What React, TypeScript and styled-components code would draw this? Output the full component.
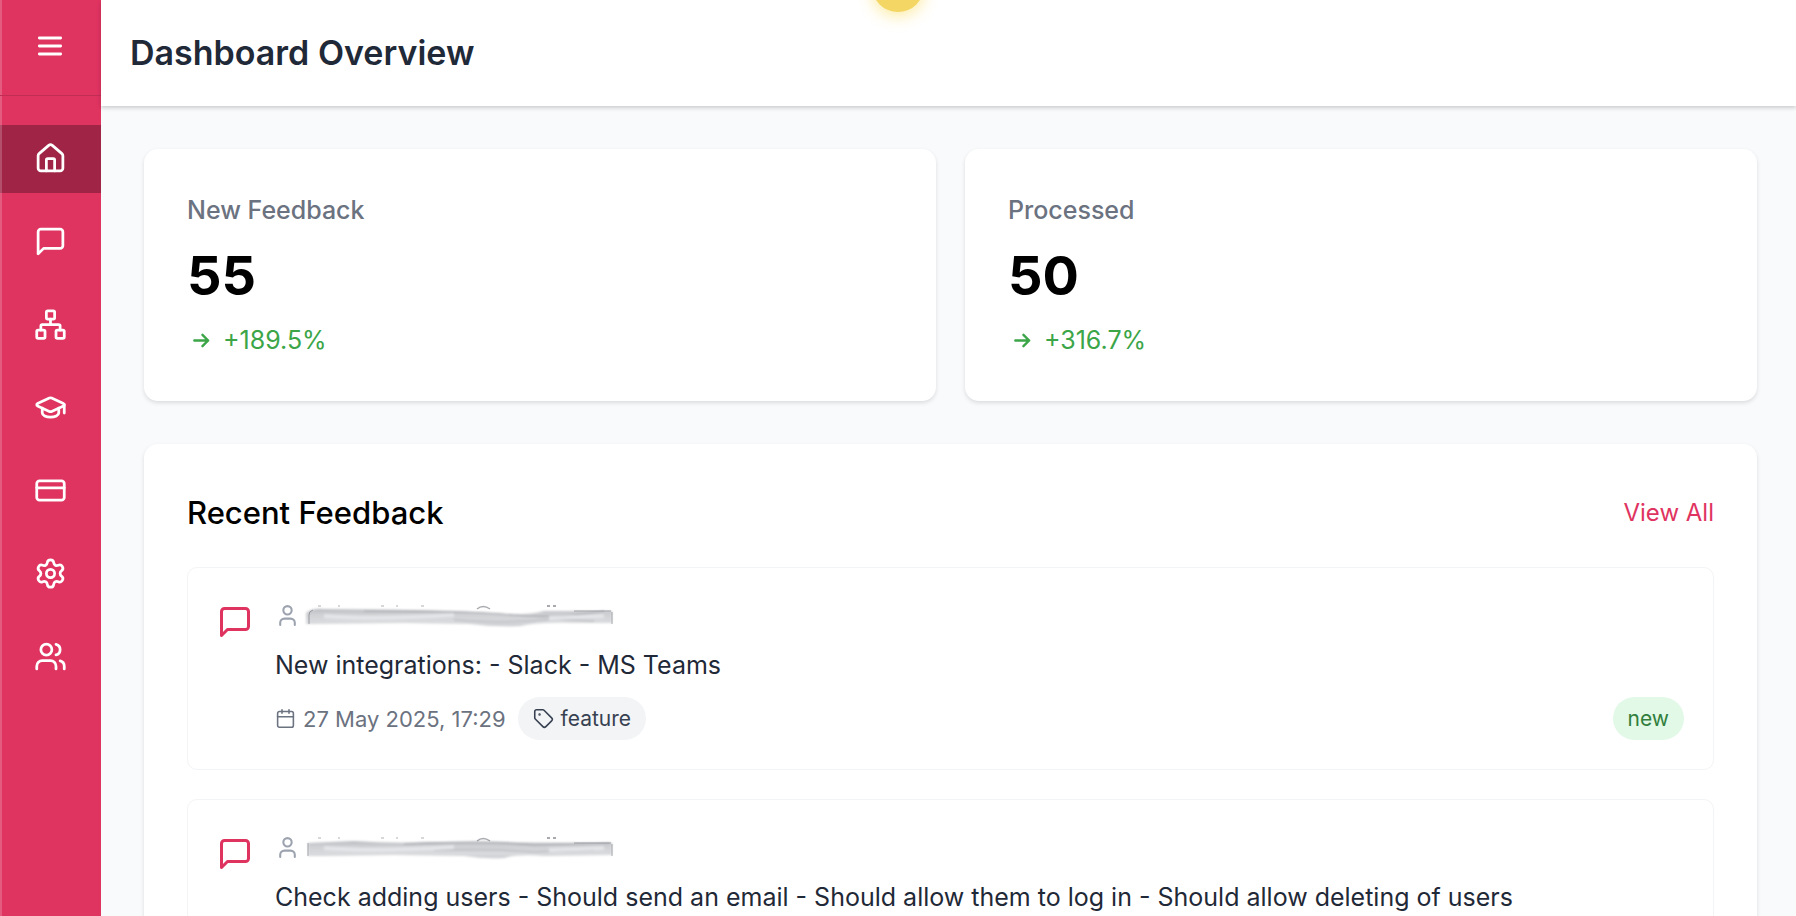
import React from "react";
import styled, { createGlobalStyle } from "styled-components";
import {
  Calendar,
  CreditCard,
  GraduationCap,
  House,
  Network,
  Settings,
  Tag,
  User,
  Users,
} from "lucide-react";

const rose = "#df3360";
const edgeLight = "inset 2px 0 rgba(255, 255, 255, 0.2)";

const GlobalStyle = createGlobalStyle`
  *, *::before, *::after { box-sizing: border-box; }
  body {
    margin: 0;
    background: #f9fafc;
    color: #1f2937;
    font-family: Inter, "Liberation Sans", sans-serif;
    font-size: 25px;
    line-height: 36px;
  }
  h1, h2, p { margin: 0; }
  svg { display: block; flex: none; }
`;

const Shell = styled.div`
  display: flex;
  height: 100vh;
  overflow: hidden;
`;

const Sidebar = styled.aside`
  flex: none;
  width: 101px;
  background: ${rose};
  box-shadow: ${edgeLight};
  color: #fff;
`;

const SidebarTop = styled.div`
  display: flex;
  justify-content: center;
  height: 96px;
  padding: 30px 1px 0 0;
  border-bottom: 1px solid #c22d55;
`;

const MenuButton = styled.button`
  width: 32px;
  height: 32px;
  padding: 0;
  border: 0;
  background: none;
  color: inherit;
  cursor: pointer;
`;

const Nav = styled.nav`
  display: flex;
  flex-direction: column;
  gap: 15px;
  padding-top: 29px;
`;

const NavLink = styled.a<{ $active?: boolean }>`
  display: flex;
  align-items: center;
  justify-content: center;
  height: 68px;
  padding: 0 1px 1px 0;
  background: ${(p) => (p.$active ? "#a02445" : "transparent")};
  box-shadow: ${(p) => (p.$active ? edgeLight : "none")};
  color: inherit;
`;

const Page = styled.div`
  display: flex;
  flex-direction: column;
  flex: 1;
  min-width: 0;
`;

const Header = styled.header`
  z-index: 1;
  flex: none;
  padding: 31px 29px;
  background: #fff;
  box-shadow: 0 2px 4px rgba(0, 0, 0, 0.18);
`;

const Title = styled.h1`
  color: #1f2937;
  font-size: 34px;
  font-weight: 600;
  line-height: 44px;
`;

const FloatingDot = styled.span`
  position: fixed;
  z-index: 2;
  top: -40px;
  left: 50%;
  width: 52px;
  height: 52px;
  margin-left: -26px;
  border-radius: 50%;
  background: #f3d664;
  box-shadow: 0 4px 16px rgba(250, 204, 21, 0.4);
`;

const Main = styled.main`
  display: flex;
  flex-direction: column;
  flex: 1;
  gap: 43px;
  min-height: 0;
  padding: 43px 39px 43px 43px;
  overflow: hidden;
`;

const Stats = styled.section`
  display: grid;
  grid-template-columns: 1fr 1fr;
  gap: 29px;
`;

const Card = styled.div`
  padding: 43px;
  border-radius: 14px;
  background: #fff;
  box-shadow: 0 2px 4px rgba(0, 0, 0, 0.12);
`;

const StatLabel = styled.p`
  color: #6b7280;
  font-weight: 500;
`;

const StatValue = styled.p`
  padding: 16px 0 14px;
  color: #000;
  font-size: 54px;
  font-weight: 700;
  line-height: 64px;
`;

const Trend = styled.p`
  display: flex;
  align-items: center;
  gap: 7px;
  color: #3ba548;
`;

const PanelHead = styled.div`
  display: flex;
  align-items: center;
  justify-content: space-between;
  padding: 8px 0 36px;
`;

const PanelTitle = styled.h2`
  color: #000;
  font-size: 31px;
  font-weight: 500;
  line-height: 36px;
`;

const ViewAll = styled.a`
  color: ${rose};
  font-size: 24px;
  text-decoration: none;
`;

const List = styled.div`
  display: flex;
  flex-direction: column;
  gap: 29px;
`;

const Item = styled.article`
  display: flex;
  gap: 22px;
  padding: 29px;
  border: 1px solid #f3f4f6;
  border-radius: 10px;
`;

const ItemIcon = styled.div`
  padding-top: 7px;
  color: ${rose};
`;

const ItemBody = styled.div`
  flex: 1;
  min-width: 0;
`;

const Author = styled.div`
  display: flex;
  align-items: center;
  gap: 4px;
  height: 36px;
  color: #9ca3af;
`;

const ItemText = styled.p`
  padding: 14px 0;
`;

const Meta = styled.div`
  display: flex;
  align-items: center;
  gap: 12px;
  color: #6b7280;
`;

const DateText = styled.span`
  display: flex;
  align-items: center;
  gap: 7px;
  font-size: 22px;
`;

const Chip = styled.span<{ $green?: boolean }>`
  display: flex;
  align-items: center;
  gap: 7px;
  height: 43px;
  margin-left: ${(p) => (p.$green ? "auto" : "0")};
  padding: 0 15px;
  border-radius: 22px;
  background: ${(p) => (p.$green ? "#e1f9e6" : "#f3f4f6")};
  color: ${(p) => (p.$green ? "#317e3d" : "#374151")};
  font-size: 21px;
`;

interface StrokeIconProps {
  size: number;
  d: string;
  weight?: number;
}

function StrokeIcon({ size, d, weight = 2 }: StrokeIconProps) {
  return (
    <svg
      width={size}
      height={size}
      viewBox="0 0 24 24"
      fill="none"
      stroke="currentColor"
      strokeWidth={weight}
      strokeLinecap="round"
      strokeLinejoin="round"
      aria-hidden="true"
    >
      <path d={d} />
    </svg>
  );
}

const MenuIcon = () => <StrokeIcon size={32} weight={2.1} d="M4 6h16M4 12h16M4 18h16" />;
const TrendIcon = () => <StrokeIcon size={29} d="M6.1 12h11.4M12.8 7.3l4.7 4.7-4.7 4.7" />;
const MessageIcon = ({ size }: { size: number }) => (
  <StrokeIcon size={size} d="M21 15a2 2 0 0 1-2 2H7l-4 4V5a2 2 0 0 1 2-2h14a2 2 0 0 1 2 2z" />
);

type SmearVariant = "soft" | "square";

// Smudged-out author address.
function HiddenAuthor({ variant }: { variant: SmearVariant }) {
  const id = `smear-${variant}`;
  const soft = variant === "soft";
  return (
    <svg width="316" height="30" viewBox="0 0 316 30" role="img" aria-label="Hidden author">
      <defs>
        <linearGradient id={id} x1="0" x2="0" y1="0" y2="1">
          <stop offset="0" stopColor="#b9bbc0" />
          <stop offset="0.3" stopColor="#cfd0d3" />
          <stop offset="0.75" stopColor="#dadbde" />
          <stop offset="1" stopColor="#c9cbce" />
        </linearGradient>
        <filter id={`${id}-blur`} x="-5%" y="-40%" width="110%" height="180%">
          <feGaussianBlur stdDeviation="1" />
        </filter>
      </defs>
      <g filter={`url(#${id}-blur)`}>
        <path
          d={
            soft
              ? "M2 13Q8 8 20 9L110 10Q170 11 200 14Q225 15 240 11L308 11V23L270 23Q235 22 216 26Q190 27 165 24L100 23L2 24Z"
              : "M4 11L50 9Q90 12 130 10L308 11V23L240 24Q215 22 200 26Q180 27 160 24L90 23L20 24L4 24Z"
          }
          fill={`url(#${id})`}
        />
        <path
          d={soft ? "M60 11Q170 11 210 15T300 11" : "M100 12Q190 8 230 13L306 11"}
          stroke="#9fa1a7"
          strokeWidth="1.2"
          fill="none"
        />
        <path
          d={soft ? "M150 20Q200 24 250 19L290 21" : "M130 18Q190 17 230 20L290 18"}
          stroke="#bdbfc3"
          strokeWidth="1.5"
          fill="none"
        />
        <path d="M20 16Q70 20 150 15M245 18L300 16" stroke="#e4e5e8" strokeWidth="4" fill="none" />
      </g>
      <g stroke="#6f727a" fill="none" opacity="0.6">
        <path d="M308 12V24M270 11L307 11" />
        <path d={soft ? "M5 24V15Q5 11 9 10" : "M4 11V24"} />
        <path d="M14 6h3M34 6h2M77 6h3M92 6h2M117 6h3" strokeWidth="1.5" opacity="0.6" />
        <path d="M173 9Q179 4 186 9" strokeWidth="1.5" />
        <path d="M243 6h3M249 6h3" strokeWidth="2" />
      </g>
    </svg>
  );
}

interface Feedback {
  text: string;
  smear: SmearVariant;
  date?: string;
  tag?: string;
  status?: string;
}

const feedback: Feedback[] = [
  {
    text: "New integrations: - Slack - MS Teams",
    smear: "soft",
    date: "27 May 2025, 17:29",
    tag: "feature",
    status: "new",
  },
  {
    text: "Check adding users - Should send an email - Should allow them to log in - Should allow deleting of users",
    smear: "square",
  },
];

const stats = [
  { label: "New Feedback", value: "55", trend: "+189.5%" },
  { label: "Processed", value: "50", trend: "+316.7%" },
];

const links = [
  { label: "Home", icon: <House size={33} />, active: true },
  { label: "Feedback", icon: <MessageIcon size={33} /> },
  { label: "Structure", icon: <Network size={33} /> },
  { label: "Learning", icon: <GraduationCap size={33} /> },
  { label: "Billing", icon: <CreditCard size={33} /> },
  { label: "Settings", icon: <Settings size={33} /> },
  { label: "Users", icon: <Users size={33} /> },
];

export default function App() {
  return (
    <>
      <GlobalStyle />
      <Shell>
        <Sidebar>
          <SidebarTop>
            <MenuButton type="button" aria-label="Menu">
              <MenuIcon />
            </MenuButton>
          </SidebarTop>
          <Nav>
            {links.map((link) => (
              <NavLink key={link.label} href="#" aria-label={link.label} $active={link.active}>
                {link.icon}
              </NavLink>
            ))}
          </Nav>
        </Sidebar>
        <Page>
          <Header>
            <Title>Dashboard Overview</Title>
          </Header>
          <FloatingDot />
          <Main>
            <Stats>
              {stats.map((stat) => (
                <Card key={stat.label}>
                  <StatLabel>{stat.label}</StatLabel>
                  <StatValue>{stat.value}</StatValue>
                  <Trend>
                    <TrendIcon />
                    {stat.trend}
                  </Trend>
                </Card>
              ))}
            </Stats>
            <Card as="section">
              <PanelHead>
                <PanelTitle>Recent Feedback</PanelTitle>
                <ViewAll href="#">View All</ViewAll>
              </PanelHead>
              <List>
                {feedback.map((item) => (
                  <Item key={item.text}>
                    <ItemIcon>
                      <MessageIcon size={36} />
                    </ItemIcon>
                    <ItemBody>
                      <Author>
                        <User size={25} />
                        <HiddenAuthor variant={item.smear} />
                      </Author>
                      <ItemText>{item.text}</ItemText>
                      {item.date && (
                        <Meta>
                          <DateText>
                            <Calendar size={21} strokeWidth={1.8} />
                            {item.date}
                          </DateText>
                          <Chip>
                            <Tag size={21} strokeWidth={1.8} />
                            {item.tag}
                          </Chip>
                          <Chip $green>{item.status}</Chip>
                        </Meta>
                      )}
                    </ItemBody>
                  </Item>
                ))}
              </List>
            </Card>
          </Main>
        </Page>
      </Shell>
    </>
  );
}
